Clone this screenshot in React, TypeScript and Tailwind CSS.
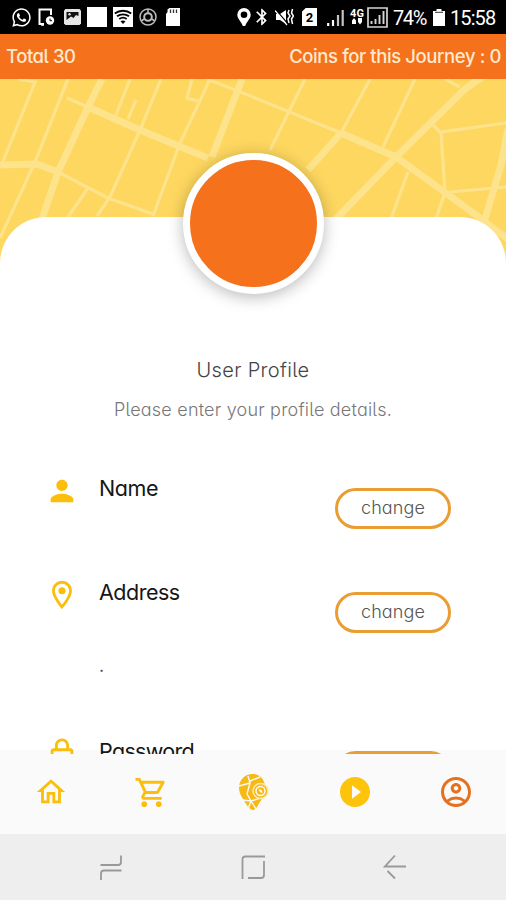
import type { ReactNode } from "react"
import {
  MdBluetooth,
  MdOutlineAccountCircle,
  MdOutlineHome,
  MdOutlineLocationOn,
  MdOutlineLock,
  MdOutlineShoppingCart,
  MdPerson,
  MdPlayCircleFilled,
} from "react-icons/md"
import { FaWhatsapp } from "react-icons/fa"

const thinRoads = [
  "M18 0L35 3L2 85",
  "M68 0L35 83L0 159",
  "M67 19L88 28",
  "M130 0L116 36",
  "M136 21L128 40",
  "M161 0L140 51L110 118L97 137",
  "M210 0L180 64L153 137",
  "M88 109L68 138",
  "M58 93L108 119L153 135",
  "M192 0L187 19L198 22",
  "M305 0L270 71",
  "M370 0L341 54",
  "M415 0L383 68",
  "M445 0L460 8",
  "M433 46L440 53L506 44",
  "M441 53L445 113L436 140",
  "M450 113L506 108",
  "M408 93L391 140",
  "M207 0L253 18L341 54",
]

const wideRoads = [
  "M102 0L88 28L58 93L42 140",
  "M88 28L140 51L208 79",
  "M0 86L37 85L58 93",
  "M242 0L212 78",
  "M341 54L308 91",
  "M341 54L396 78L476 136L510 162",
  "M484 -3L466 9L396 78L335 141",
  "M508 50L501 86L485 140",
]

function StatusBar() {
  return (
    <div className="flex h-[34px] items-center justify-between bg-black pl-[11px] pr-[10px] text-white">
      <div className="flex items-center">
        <FaWhatsapp className="h-[21px] w-[21px]" />
        <svg className="ml-[6px] h-[18px] w-[18px]" viewBox="0 0 18 18" fill="none" stroke="currentColor">
          <path d="M6 16H1.5V1.5H13V7" strokeWidth="2" />
          <circle cx="12" cy="12.5" r="4.2" fill="currentColor" stroke="none" />
          <path d="M12 10.5V12.7H14" stroke="#000" strokeWidth="1" />
          <path d="M3 16.5H6" strokeWidth="2.5" />
        </svg>
        <svg className="ml-[8px] h-[16px] w-[17px]" viewBox="0 0 17 16">
          <path d="M1.500 0H15.500L17 1.500V14.500L15.500 16H1.500L0 14.500V1.500Z" fill="#e6e6e6" />
          <path d="M2.500 3H14.500V7L12 6L9.500 9L7 7.500L2.500 11Z" fill="#111" />
          <circle cx="5.500" cy="5.200" r="1.200" fill="#e6e6e6" />
        </svg>
        <div className="ml-[6px] h-5 w-5 bg-white" />
        <svg className="ml-[6px] h-5 w-5" viewBox="0 0 20 20" fill="none" stroke="#000" strokeWidth="1.8">
          <path d="M0 0H20V20H0Z" fill="#fff" stroke="none" />
          <path d="M1.8 6.5C6.5 2.8 13.5 2.8 18.2 6.5M4 9.3C7.5 6.6 12.5 6.6 16 9.3M6.3 12C8.5 10.4 11.5 10.4 13.7 12" />
          <path d="M7.5 14.2C9 13.2 11 13.2 12.5 14.2L10 17Z" fill="#000" stroke="none" />
        </svg>
        <svg className="ml-[6px] h-[18px] w-[18px]" viewBox="0 0 18 18" fill="none" stroke="#bdbdbd" strokeWidth="1.5">
          <circle cx="9" cy="9" r="8" />
          <circle cx="9" cy="9" r="3.800" strokeWidth="2" />
          <path d="M9 1V5M5.500 11L2 13M12.500 11L16 13" />
        </svg>
        <svg className="ml-[9px] h-[18px] w-[14px]" viewBox="0 0 14 18">
          <path d="M3.5 0H14V18H0V6L1.5 4V1.5Z" fill="#fff" />
          <path d="M4.5 1.5V5M7.5 1.5V5M10.5 1.5V5" stroke="#333" strokeWidth="1.3" />
        </svg>
      </div>
      <div className="flex items-center">
        <svg className="h-[18px] w-[14px]" viewBox="0 0 14 18">
          <path d="M7 0A6.7 6.7 0 0 0 .3 6.7C.3 11 4.5 13.5 5.8 18H8.2C9.5 13.5 13.7 11 13.7 6.7A6.7 6.7 0 0 0 7 0ZM7 3.4A3.3 3.3 0 1 1 7 10A3.3 3.3 0 0 1 7 3.4Z" fill="#fff" />
        </svg>
        <MdBluetooth className="ml-px h-5 w-5" />
        <svg className="ml-[3px] h-[18px] w-[19px]" viewBox="0 0 19 18" fill="#fff" stroke="#fff">
          <path d="M1 6H5L11 2V16L5 12H1Z" stroke="none" />
          <path d="M1 2L13 16" stroke="#000" strokeWidth="1.2" />
          <path d="M0 2.5L12 17" strokeWidth="1.2" />
          <path d="M14 2L13 5L15 8L13 11L14 15M17.5 1L16.5 5L18.5 8L16.5 11L17.5 16" fill="none" strokeWidth="1.5" />
        </svg>
        <div className="ml-[8px] flex h-[18px] w-[15px] items-center justify-center bg-white [clip-path:polygon(25%_0,100%_0,100%_100%,0_100%,0_20%)]">
          <span className="font-['Roboto',sans-serif] text-[13px] font-bold leading-none text-black">2</span>
        </div>
        <svg className="ml-[10px] h-[17px] w-[17px]" viewBox="0 0 17 17" fill="none" stroke="#fff" strokeWidth="2.2">
          <path d="M1.2 14V17M6 11V17" />
          <path d="M11 6V17M15.7 1V17" stroke="#c4c4c4" />
        </svg>
        <div className="ml-[5px] flex w-4 flex-col items-center">
          <span className="font-['Roboto',sans-serif] text-[11px] font-bold leading-[9px]">4G</span>
          <svg className="h-[7px] w-[12px]" viewBox="0 0 12 7" fill="#fff">
            <path d="M1 2.5L3 0L5 2.5V6H1ZM7 0H11V4L9 6.5L7 4Z" />
          </svg>
        </div>
        <svg className="ml-[2px] h-[21px] w-[21px]" viewBox="0 0 21 21" fill="none" stroke="#d4d4d4" strokeWidth="1.7">
          <path d="M1 1H20V20H1Z" />
          <path d="M4.5 14V17M8.5 12V17M12.5 8V17M16.5 4V17" strokeWidth="1.9" />
        </svg>
        <span className="ml-[5px] mt-[2px] w-[35px] whitespace-nowrap font-['Roboto',sans-serif] text-[20px] leading-none tracking-[-1.4px]">74%</span>
        <svg className="ml-[5px] h-[17px] w-[12px]" viewBox="0 0 12 17" fill="#fff">
          <path d="M3.5 0H8.5V2H12V17H0V2H3.5Z" />
          <path d="M2 3.3H10" stroke="#333" strokeWidth="1" />
        </svg>
        <span className="ml-[5px] mt-[2px] w-[46px] whitespace-nowrap font-['Roboto',sans-serif] text-[20px] leading-none tracking-[-0.9px]">15:58</span>
      </div>
    </div>
  )
}

function MapBackdrop() {
  return (
    <svg className="absolute inset-x-0 top-0 h-[190px] w-[506px]" viewBox="0 0 506 190" fill="none" stroke="#fee38d">
      <path d="M0 0H506V190H0Z" fill="#fdd75f" stroke="none" />
      {thinRoads.map((d) => (
        <path key={d} d={d} strokeWidth="3.2" />
      ))}
      {wideRoads.map((d) => (
        <path key={d} d={d} strokeWidth="7" />
      ))}
    </svg>
  )
}

function ProfileRow({ icon, label, spacing }: { icon: ReactNode; label: string; spacing: string }) {
  return (
    <div className="flex h-10 items-start pl-[45px] pr-[55px]">
      <div className="mt-[-14px] flex h-[34px] w-[34px] shrink-0 items-center justify-center text-[34px] text-[#fbbe0c]">
        {icon}
      </div>
      <span className={`ml-[20px] mt-[-13px] text-[21.5px] leading-[26px] text-[#161616] ${spacing}`}>{label}</span>
      <button className="ml-auto flex h-[41px] w-[116px] items-center justify-center rounded-full border-3 border-[#ea9d33] pb-[2px] text-[18px] font-light tracking-[0.1px] text-[#555]">
        change
      </button>
    </div>
  )
}

function MapPinLogo() {
  return (
    <svg className="h-[37px] w-[31px]" viewBox="0 0 31 37" fill="none">
      <path d="M14.500 0C7 0 1 6 1 13.500C1 20 4.500 24 7.500 29C9.500 32 11.500 35.500 15 36C18.500 35.500 20 31 22 28C25 23.500 27 19 27 13.500C27 6 22 0 14.500 0Z" fill="#f7b916" />
      <path d="M10 2L12 9L9 20L13 27L10 35M1 12L12 9M12 7L22 3M4 26L13 27L23 24M13 27L18 35" stroke="#fafafa" strokeWidth="1.4" />
      <circle cx="22.500" cy="17" r="7.500" fill="#f7b916" stroke="#fde9b0" strokeWidth="1.500" />
      <circle cx="22.500" cy="17" r="4.500" stroke="#fafafa" strokeWidth="1.500" />
      <path d="M20.500 14.500L24 16.500L24.500 19.500L21.500 17.500Z" fill="#fafafa" />
    </svg>
  )
}

export default function App() {
  return (
    <div className="flex h-[900px] w-[506px] flex-col overflow-hidden bg-white font-['Inter','Liberation_Sans',sans-serif] [font-feature-settings:'cv11','cv05']">
      <StatusBar />
      <header className="flex h-[45px] items-center justify-between bg-[#f5711c] pl-[6px] pr-[5px] text-[18.5px] font-medium text-[#ffead0]">
        <span className="tracking-[-0.45px]">Total 30</span>
        <span className="tracking-[-0.4px]">Coins for this Journey : 0</span>
      </header>

      <main className="relative h-[671px] shrink-0">
        <MapBackdrop />
        <div className="relative z-10 h-[675px] overflow-hidden pt-[138px]">
          <div className="h-[533px] rounded-t-[46px] bg-white pt-[138px]">
            <h1 className="text-center text-[20px] font-light leading-[30px] tracking-[0.35px] text-[#444]">User Profile</h1>
            <p className="mt-[10px] text-center text-[18px] font-light leading-[29px] tracking-[0.2px] text-[#777]">
              Please enter your profile details.
            </p>
            <div className="mt-[64px]">
              <ProfileRow icon={<MdPerson />} label="Name" spacing="tracking-[-0.4px]" />
              <div className="h-16" />
              <ProfileRow icon={<MdOutlineLocationOn />} label="Address" spacing="tracking-[-0.5px]" />
              <div className="h-[119px] pl-[99px] pt-[20px] text-[18px] text-[#555]">.</div>
              <ProfileRow icon={<MdOutlineLock />} label="Password" spacing="tracking-[-0.7px]" />
            </div>
          </div>
        </div>
        <div className="absolute left-[183px] top-[74px] z-20 h-[141px] w-[141px] rounded-full border-[7px] border-white bg-[#f5711c] shadow-[0_3px_16px_rgba(0,0,0,0.28)]" />
      </main>

      <nav className="flex h-[84px] items-center bg-[#fafafa] text-[#fbbe0c]">
        <div className="flex w-[101px] justify-center"><MdOutlineHome className="h-[34px] w-[34px]" /></div>
        <div className="flex w-[101px] justify-center"><MdOutlineShoppingCart className="h-[35px] w-[35px]" /></div>
        <div className="flex w-[102px] justify-center pl-px"><MapPinLogo /></div>
        <div className="flex w-[101px] justify-center"><MdPlayCircleFilled className="h-[36px] w-[36px] text-[#fec40b]" /></div>
        <div className="flex w-[101px] justify-center"><MdOutlineAccountCircle className="h-[36px] w-[36px] text-[#e5711f]" /></div>
      </nav>

      <footer className="flex h-[66px] items-center justify-between bg-[#eee] pl-[99px] pr-[99px] text-[#999]">
        <svg className="h-[26px] w-[24px]" viewBox="0 0 24 26" fill="none" stroke="currentColor" strokeWidth="1.8">
          <path d="M1.5 11H19Q22 11 22 8V1.5M22.5 16.5H5Q2 16.5 2 19.5V26" />
        </svg>
        <svg className="h-[25px] w-[25px]" viewBox="0 0 25 25" fill="none" stroke="currentColor" strokeWidth="1.8">
          <path d="M24 1.5H4Q1.5 1.5 1.5 4V24M23 6V20Q23 23 20 23H7" />
        </svg>
        <svg className="h-[26px] w-[24px]" viewBox="0 0 24 26" fill="none" stroke="currentColor" strokeWidth="1.8">
          <path d="M12 1.5L2 12.5H23M4.5 17L12 24.5" />
        </svg>
      </footer>
    </div>
  )
}
